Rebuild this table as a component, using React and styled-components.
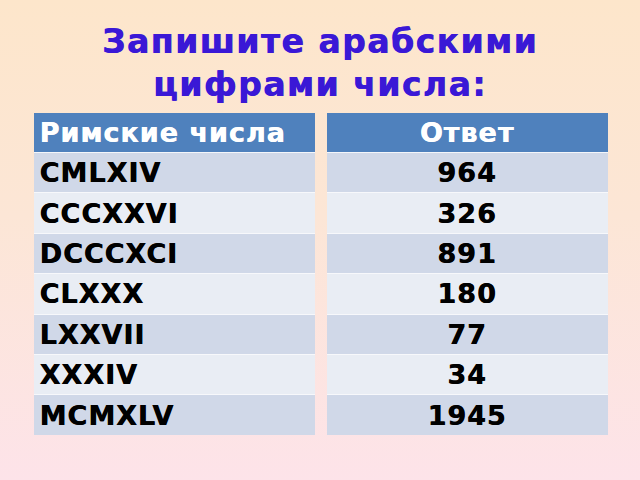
import React from 'react';
import styled, { createGlobalStyle } from 'styled-components';

const GlobalStyle = createGlobalStyle`
  html, body {
    margin: 0;
    padding: 0;
  }
  body {
    font-family: "DejaVu Sans", "Liberation Sans", sans-serif;
  }
`;

const Slide = styled.div`
  width: 640px;
  height: 480px;
  box-sizing: border-box;
  padding-top: 20px;
  background: linear-gradient(180deg, #fde6cb 0%, #fce6d6 45%, #fde3e9 100%);
  display: flex;
  flex-direction: column;
  align-items: center;
  overflow: hidden;
`;

const Title = styled.h1`
  margin: 0;
  font-family: "DejaVu Sans", sans-serif;
  font-weight: bold;
  font-size: 33px;
  line-height: 43px;
  letter-spacing: 1.5px;
  text-shadow: 0.6px 0 0 currentColor;
  color: #3a18d6;
  text-align: center;
`;

const Tables = styled.div`
  margin-top: 7px;
  display: flex;
  gap: 12px;
  padding-left: 1px;
`;

const Column = styled.div`
  width: 281px;
  display: flex;
  flex-direction: column;
`;

const HeadCell = styled.div`
  height: 39px;
  background: #4f81bd;
  color: #ffffff;
  border-bottom: 1px solid #f4f6fa;
  font-weight: bold;
  font-size: 27px;
  letter-spacing: 1px;
  text-shadow: 0.5px 0 0 currentColor;
  display: flex;
  align-items: center;
  justify-content: ${(p) => (p.$center ? 'center' : 'flex-start')};
  padding-left: ${(p) => (p.$center ? '0' : '6px')};
`;

const Cell = styled.div`
  height: 39.4px;
  background: ${(p) => (p.$odd ? '#d0d8e8' : '#e9edf4')};
  border-bottom: 1px solid #f7f8fb;
  color: #000000;
  font-weight: bold;
  font-size: 27px;
  letter-spacing: 1px;
  text-shadow: 0.5px 0 0 currentColor;
  display: flex;
  align-items: center;
  justify-content: ${(p) => (p.$center ? 'center' : 'flex-start')};
  padding-left: ${(p) => (p.$center ? '0' : '6px')};
  &:last-child {
    border-bottom: none;
  }
`;

const rows = [
  ['CMLXIV', '964'],
  ['CCCXXVI', '326'],
  ['DCCCXCI', '891'],
  ['CLXXX', '180'],
  ['LXXVII', '77'],
  ['XXXIV', '34'],
  ['MCMXLV', '1945'],
];

export default function App() {
  return (
    <>
      <GlobalStyle />
      <Slide>
        <Title>
          Запишите арабскими
          <br />
          цифрами числа:
        </Title>
        <Tables>
          <Column>
            <HeadCell>Римские числа</HeadCell>
            {rows.map((r, i) => (
              <Cell key={r[0]} $odd={i % 2 === 0}>
                {r[0]}
              </Cell>
            ))}
          </Column>
          <Column>
            <HeadCell $center>Ответ</HeadCell>
            {rows.map((r, i) => (
              <Cell key={r[1]} $odd={i % 2 === 0} $center>
                {r[1]}
              </Cell>
            ))}
          </Column>
        </Tables>
      </Slide>
    </>
  );
}
